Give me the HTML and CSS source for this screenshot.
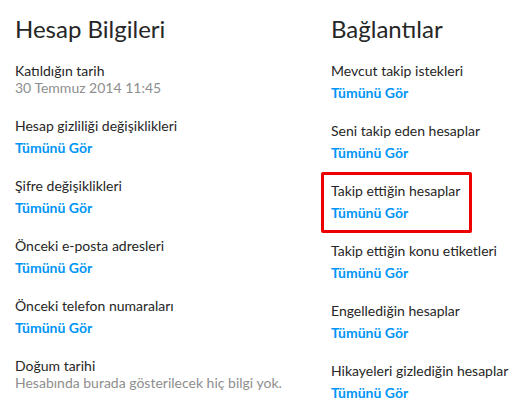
FILE: index.html
```html
<!DOCTYPE html>
<html lang="tr">
<head>
<meta charset="utf-8">
<title>Hesap Bilgileri</title>
<link rel="stylesheet" href="styles.css">
</head>
<body>
<div class="page">
  <section class="col col-left">
    <h2 class="title">Hesap Bilgileri</h2>
    <div class="item">
      <div class="label">Katıldığın tarih</div>
      <div class="value">30 Temmuz 2014 11:45</div>
    </div>
    <div class="item">
      <div class="label">Hesap gizliliği değişiklikleri</div>
      <a class="link" href="#">Tümünü Gör</a>
    </div>
    <div class="item">
      <div class="label">Şifre değişiklikleri</div>
      <a class="link" href="#">Tümünü Gör</a>
    </div>
    <div class="item">
      <div class="label">Önceki e-posta adresleri</div>
      <a class="link" href="#">Tümünü Gör</a>
    </div>
    <div class="item">
      <div class="label">Önceki telefon numaraları</div>
      <a class="link" href="#">Tümünü Gör</a>
    </div>
    <div class="item">
      <div class="label">Doğum tarihi</div>
      <div class="value">Hesabında burada gösterilecek hiç bilgi yok.</div>
    </div>
  </section>
  <section class="col col-right">
    <h2 class="title">Bağlantılar</h2>
    <div class="item">
      <div class="label">Mevcut takip istekleri</div>
      <a class="link" href="#">Tümünü Gör</a>
    </div>
    <div class="item">
      <div class="label">Seni takip eden hesaplar</div>
      <a class="link" href="#">Tümünü Gör</a>
    </div>
    <div class="item item-highlight">
      <div class="label">Takip ettiğin hesaplar</div>
      <a class="link" href="#">Tümünü Gör</a>
    </div>
    <div class="item">
      <div class="label">Takip ettiğin konu etiketleri</div>
      <a class="link" href="#">Tümünü Gör</a>
    </div>
    <div class="item">
      <div class="label">Engellediğin hesaplar</div>
      <a class="link" href="#">Tümünü Gör</a>
    </div>
    <div class="item">
      <div class="label">Hikayeleri gizlediğin hesaplar</div>
      <a class="link" href="#">Tümünü Gör</a>
    </div>
  </section>
</div>
</body>
</html>
```
FILE: styles.css
```css
html, body {
  margin: 0;
  padding: 0;
  background: #ffffff;
}

body {
  font-family: Lato, "Liberation Sans", sans-serif;
  font-size: 14px;
  color: #262626;
}

.page {
  display: flex;
  padding: 0 0 0 15px;
}

.col-left {
  width: 316px;
  flex: none;
}

.col-right {
  flex: 1;
}

.title {
  margin: 14px 0 18px;
  font-size: 24px;
  font-weight: 400;
  line-height: 30px;
}

.item {
  display: flex;
  flex-direction: column;
  align-items: flex-start;
  margin-bottom: 20px;
}

.label {
  line-height: 18px;
}

.value {
  line-height: 18px;
  margin-top: -1px;
  color: #8e8e8e;
}

.link {
  line-height: 18px;
  margin-top: 4px;
  color: #0095f6;
  font-weight: 700;
  text-decoration: none;
}

.item-highlight {
  position: relative;
  width: fit-content;
}

.item-highlight::after {
  content: "";
  position: absolute;
  top: -10px;
  bottom: -11px;
  left: -10px;
  right: -12px;
  border: 3px solid #ee0000;
  border-radius: 2px;
}
```
